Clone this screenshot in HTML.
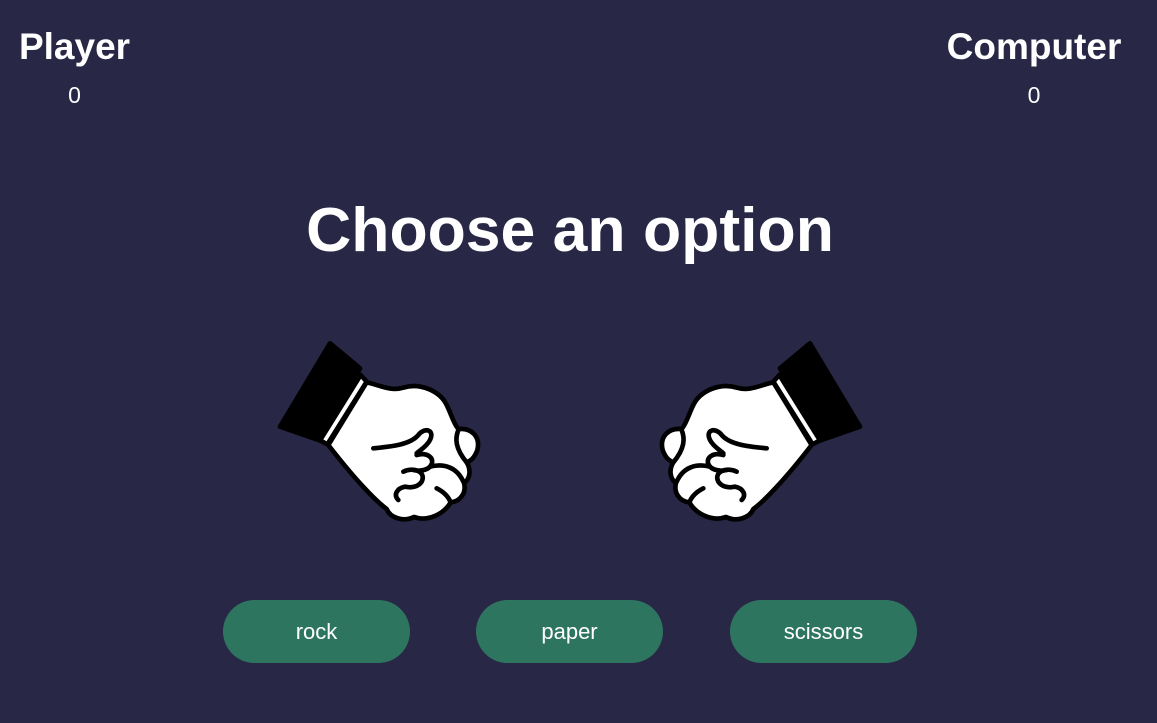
<!DOCTYPE html>
<html><head><meta charset="utf-8"><style>
html,body{margin:0;padding:0;width:1157px;height:723px;background:#282846;overflow:hidden;font-family:"Liberation Sans",Arial,sans-serif;color:#fff}
.sc{position:absolute;text-align:center}
.sc h2{margin:0;font-size:37px;font-weight:bold;line-height:40px}
.sc div{font-size:23px;margin-top:15px}
h1{position:absolute;left:0;width:1140px;top:195px;margin:0;text-align:center;font-size:62.5px;line-height:70px;font-weight:bold}
.btn{position:absolute;top:600px;width:187px;height:63px;border-radius:32px;background:#2e7560;color:#fff;font-size:22px;line-height:63px;text-align:center}
svg{position:absolute;top:335px}
</style></head><body>
<div class="sc" style="left:16px;top:27px;width:117px"><h2>Player</h2><div>0</div></div>
<div class="sc" style="left:943px;top:27px;width:182px"><h2>Computer</h2><div>0</div></div>
<h1>Choose an option</h1>
<svg width="220" height="195" viewBox="0 0 660 585" style="left:270px">
<g id="f" stroke="#000" stroke-width="14" stroke-linejoin="round" stroke-linecap="round">
<path d="M180,25 L270,100 L160,320 L30,275 Z" fill="#000"/>
<path d="M272,120 L290,140 L172,328 L150,316 Z" fill="#fff"/>
<path d="M290,142 C330,150 360,170 400,158 C450,142 510,168 530,210 C545,240 550,265 565,282 C605,278 632,305 622,345 C612,372 600,378 590,382 C604,405 600,432 582,444 C590,474 570,500 542,502 C520,540 470,560 432,546 C400,562 360,548 350,522 C320,500 260,440 175,330 Z" fill="#fff"/>
<path d="M310,340 C360,335 420,330 445,300 C465,275 495,285 480,315 C470,335 450,345 440,355" fill="none"/>
<path d="M440,360 C470,350 500,370 480,395 C470,405 450,410 430,405" fill="none"/>
<path d="M400,410 C430,395 470,410 455,440 C445,455 425,460 405,455 C380,460 370,480 385,495" fill="none"/>
<path d="M480,395 C520,385 560,395 580,440" fill="none"/>
<path d="M500,460 C520,470 535,485 542,502" fill="none"/>
<path d="M565,285 C555,310 555,340 590,382" fill="none"/>
</g>
</svg>
<svg width="220" height="195" viewBox="0 0 660 585" style="left:650px;transform:scaleX(-1)">
<use href="#f"/>
</svg>
<div class="btn" style="left:223px">rock</div>
<div class="btn" style="left:476px">paper</div>
<div class="btn" style="left:730px">scissors</div>
</body></html>
